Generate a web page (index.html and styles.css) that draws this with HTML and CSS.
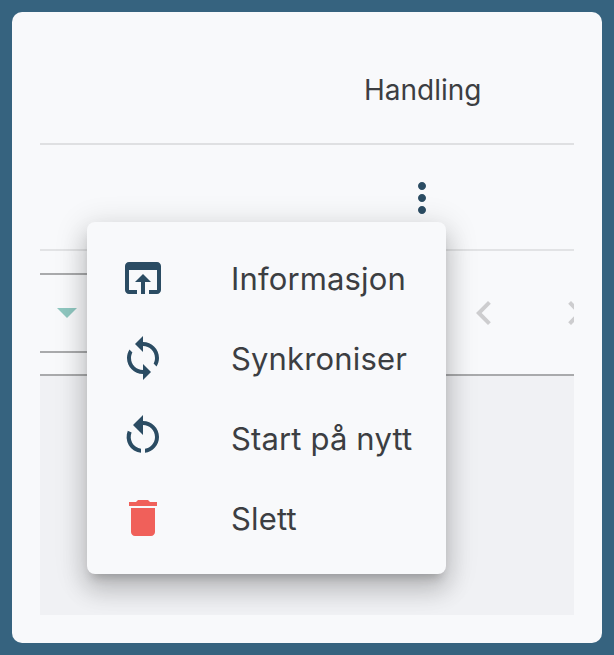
FILE: index.html
```html
<!DOCTYPE html>
<html lang="no">
<head>
<meta charset="utf-8">
<title>Handling</title>
<link rel="stylesheet" href="styles.css">
</head>
<body>
<main class="card">
  <div class="table">
    <div class="head"><span class="head-label">Handling</span></div>
    <div class="row">
      <svg class="icon icon-dark" viewBox="0 0 24 24"><path d="M12 8c1.1 0 2-.9 2-2s-.9-2-2-2-2 .9-2 2 .9 2 2 2zm0 2c-1.1 0-2 .9-2 2s.9 2 2 2 2-.9 2-2-.9-2-2-2zm0 6c-1.1 0-2 .9-2 2s.9 2 2 2 2-.9 2-2-.9-2-2-2z"/></svg>
    </div>
    <div class="pager">
      <div class="select"><span class="caret"></span></div>
      <div class="arrows">
        <svg class="icon icon-muted" viewBox="0 0 24 24"><path d="M15.41 7.41L14 6l-6 6 6 6 1.41-1.41L10.83 12z"/></svg>
        <svg class="icon icon-muted" viewBox="0 0 24 24"><path d="M10 6L8.59 7.41 13.17 12l-4.58 4.58L10 18l6-6z"/></svg>
      </div>
    </div>
    <div class="rest"></div>
  </div>
  <ul class="menu">
    <li class="menu-item">
      <svg class="icon icon-dark" viewBox="0 0 24 24"><path d="M19 4H5c-1.11 0-2 .9-2 2v12c0 1.1.89 2 2 2h4v-2H5V8h14v10h-4v2h4c1.1 0 2-.9 2-2V6c0-1.1-.89-2-2-2zm-7 6l-4 4h3v6h2v-6h3l-4-4z"/></svg>
      <span>Informasjon</span>
    </li>
    <li class="menu-item">
      <svg class="icon icon-dark" viewBox="0 0 24 24"><path d="M12 4V1L8 5l4 4V6c3.31 0 6 2.69 6 6 0 1.01-.25 1.97-.7 2.8l1.46 1.46C19.54 15.03 20 13.57 20 12c0-4.42-3.58-8-8-8zm0 14c-3.31 0-6-2.69-6-6 0-1.01.25-1.97.7-2.8L5.24 7.74C4.46 8.97 4 10.43 4 12c0 4.42 3.58 8 8 8v3l4-4-4-4v3z"/></svg>
      <span>Synkroniser</span>
    </li>
    <li class="menu-item">
      <svg class="icon icon-dark" viewBox="0 0.5 24 24"><path d="M12 1L7 6l5 5V6c3.31 0 6 2.69 6 6 0 2.97-2.17 5.43-5 5.91v2.02c3.95-.49 7-3.85 7-7.93 0-4.42-3.58-8-8-8zM11 19.93A8 8 0 0 1 4.4 8.9L6.3 9.7A6 6 0 0 0 11 17.91z"/></svg>
      <span>Start på nytt</span>
    </li>
    <li class="menu-item">
      <svg class="icon icon-danger" viewBox="0 0 24 24"><path d="M6 19c0 1.1.9 2 2 2h8c1.1 0 2-.9 2-2V7H6v12zM19 4h-3.5l-1-1h-5l-1 1H5v2h14V4z"/></svg>
      <span>Slett</span>
    </li>
  </ul>
</main>
</body>
</html>
```
FILE: styles.css
```css
* { box-sizing: border-box; }
html, body { margin: 0; height: 100%; overflow: hidden; }
body {
  background: #36637f;
  padding: 12px;
  font-family: Inter, Roboto, "Liberation Sans", sans-serif;
  color: #3c3e42;
}
.card {
  position: relative;
  width: 590px;
  height: 631px;
  padding: 28px;
  background: #f8f9fb;
  border-radius: 10px;
}
.table {
  display: flex;
  flex-direction: column;
  height: 100%;
  overflow: hidden;
}
.icon { display: block; width: 48px; height: 48px; flex: none; }
.icon-dark { fill: #2b4c63; }
.icon-muted { fill: #cdcdcf; }
.icon-danger { fill: #f0605a; }
.head {
  height: 105px;
  padding: 0 0 3px 324px;
  display: flex;
  align-items: center;
  font-size: 28px;
  border-bottom: 2px solid #dfe0e2;
}
.row {
  height: 106px;
  padding: 1px 128px 0 0;
  display: flex;
  align-items: center;
  justify-content: flex-end;
  border-bottom: 2px solid #e2e3e5;
}
.pager {
  height: 125px;
  display: flex;
  border-bottom: 2px solid #a9aaac;
}
.select {
  flex: none;
  width: 300px;
  height: 80px;
  margin-top: 22px;
  padding-left: 17px;
  display: flex;
  align-items: center;
  border-top: 2px solid #a9aaac;
  border-bottom: 2px solid #a9aaac;
}
.caret {
  width: 0;
  height: 0;
  border-left: 10px solid transparent;
  border-right: 10px solid transparent;
  border-top: 10px solid #8fc7c0;
}
.arrows {
  flex: none;
  display: flex;
  gap: 43px;
  margin-top: 38px;
  margin-left: 120px;
}
.rest { flex: 1; background: #f0f1f4; }
.menu {
  position: absolute;
  left: 75px;
  top: 210px;
  width: 359px;
  margin: 0;
  padding: 16px 0;
  list-style: none;
  background: #f8f9fb;
  border-radius: 8px;
  box-shadow: 0 8px 10px -5px rgba(0,0,0,.2), 0 16px 24px 2px rgba(0,0,0,.14), 0 6px 30px 5px rgba(0,0,0,.12);
}
.menu-item {
  height: 80px;
  padding-left: 32px;
  display: flex;
  align-items: center;
  gap: 64px;
  font-size: 31px;
  letter-spacing: .15px;
}
```
